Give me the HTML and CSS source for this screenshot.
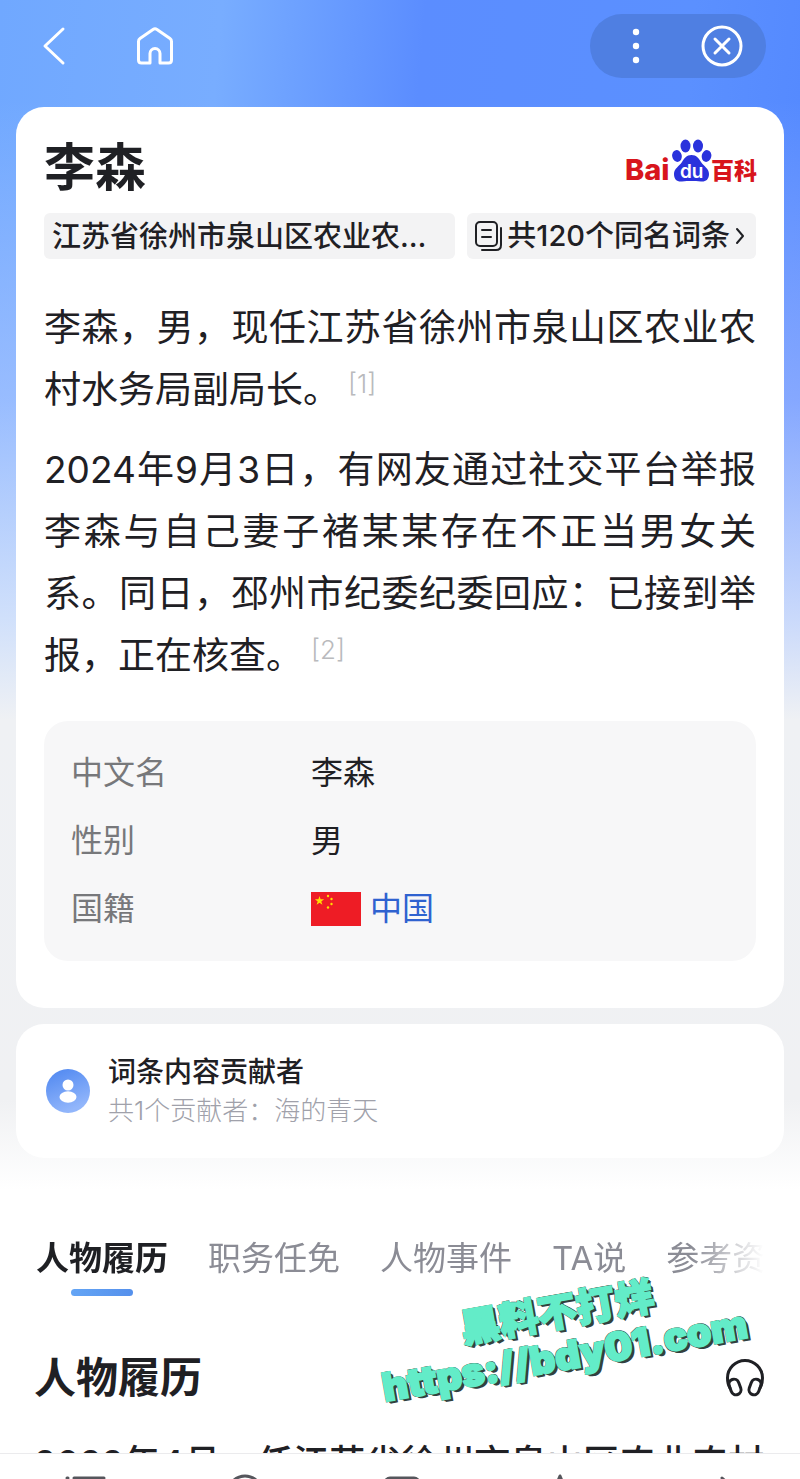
FILE: index.html
```html
<!DOCTYPE html>
<html lang="zh-CN">
<head>
    <meta charset="UTF-8">
    <meta name="viewport" content="width=device-width, initial-scale=1.0">
    <title>李森 - 百度百科</title>
    <link rel="stylesheet" href="styles.css">
</head>
<body>
    <div class="app">
        <div class="content">
            <header class="topbar">
                <button class="icon-btn" aria-label="返回">
                    <svg width="24" height="40" viewBox="0 0 24 40"><path d="M21 3 3 20l18 17"/></svg>
                </button>
                <button class="icon-btn home" aria-label="首页">
                    <svg width="40" height="40" viewBox="0 0 40 40"><path d="M3.500 15.500Q3.500 13.500 5 12.500L18 3.500q2-1.300 4 0l13 9q1.500 1 1.500 3V34q0 3-3 3H25v-9.500a5 5 0 0 0-10 0V37H6.500q-3 0-3-3Z"/></svg>
                </button>
                <div class="capsule">
                    <button class="icon-btn" aria-label="更多">
                        <svg class="dots" width="8" height="36" viewBox="0 0 8 36"><circle cx="4" cy="4" r="3.200"/><circle cx="4" cy="18" r="3.200"/><circle cx="4" cy="32" r="3.200"/></svg>
                    </button>
                    <button class="icon-btn" aria-label="关闭">
                        <svg width="44" height="44" viewBox="0 0 44 44"><circle cx="22" cy="22" r="19"/><path d="m15 15 14 14M29 15 15 29"/></svg>
                    </button>
                </div>
            </header>

            <section class="card summary">
                <div class="title-row">
                    <h1>李森</h1>
                    <svg class="logo" width="132" height="44" viewBox="0 0 132 44" role="img" aria-label="Baidu百科">
                        <text class="logo-red" x="1" y="41" font-size="29">Bai</text>
                        <g fill="#2a32dc">
                            <ellipse cx="53" cy="17" rx="4.800" ry="6" transform="rotate(-12 53 17)"/>
                            <ellipse cx="61.500" cy="7" rx="5" ry="6.400"/>
                            <ellipse cx="74" cy="7" rx="5" ry="6.400"/>
                            <ellipse cx="82.500" cy="17" rx="4.800" ry="6" transform="rotate(12 82.500 17)"/>
                            <path d="M67.500 16c5 0 7.500 3.500 9.500 7 2.500 4 8 6.500 8 12 0 5.500-3.500 8-8 7.500-4-.500-6-.500-9.500-.500s-6 0-9.500.500c-5 .500-8-2-8-7.500 0-5.500 5.500-8 8-12 2-3.500 4.500-7 9.500-7Z"/>
                        </g>
                        <text class="logo-du" x="56" y="39" font-size="19">du</text>
                        <text class="logo-cn" x="87" y="40" font-size="23">百科</text>
                    </svg>
                </div>

                <div class="chips">
                    <button class="chip desc">江苏省徐州市泉山区农业农村水务局副局长</button>
                    <button class="chip same">
                        <svg width="28" height="32" viewBox="0 0 28 32"><rect x="1" y="2" width="21" height="24" rx="4"/><path d="M7 10h9M7 17h9M26 8v17q0 5-5 5H7"/></svg>
                        <span>共120个同名词条</span>
                        <svg class="arrow" width="12" height="20" viewBox="0 0 12 20"><path d="m3 3 6 7-6 7"/></svg>
                    </button>
                </div>

                <div class="intro">
                    <p>李森，男，现任江苏省徐州市泉山区农业农村水务局副局长。<a class="ref" href="#ref1">[1]</a></p>
                    <p>2024年9月3日，有网友通过社交平台举报李森与自己妻子褚某某存在不正当男女关系。同日，邳州市纪委纪委回应：已接到举报，正在核查。<a class="ref" href="#ref2">[2]</a></p>
                </div>

                <dl class="info">
                    <dt>中文名</dt><dd>李森</dd>
                    <dt>性别</dt><dd>男</dd>
                    <dt>国籍</dt>
                    <dd>
                        <svg width="50" height="34" viewBox="0 0 50 34">
                            <rect width="50" height="34" fill="#ee1c25"/>
                            <g fill="#ffde00">
                                <path d="m8.500 4 1.100 3.300h3.500l-2.800 2.100 1.100 3.400-2.900-2.100-2.900 2.100 1.100-3.400-2.800-2.100h3.500Z"/>
                                <circle cx="17" cy="4" r="1.200"/><circle cx="20.500" cy="7" r="1.200"/><circle cx="20.500" cy="12" r="1.200"/><circle cx="17" cy="15.500" r="1.200"/>
                            </g>
                        </svg>
                        <a href="#china">中国</a>
                    </dd>
                </dl>
            </section>

            <section class="card contributor">
                <svg width="44" height="44" viewBox="0 0 44 44">
                    <defs>
                        <linearGradient id="avatar" x1="0" y1="0" x2="0.400" y2="1"><stop offset="0" stop-color="#4d86f0"/><stop offset="1" stop-color="#92b6fb"/></linearGradient>
                    </defs>
                    <circle cx="22" cy="22" r="22" fill="url(#avatar)"/>
                    <circle cx="22" cy="16" r="5.500" fill="#fff"/>
                    <ellipse cx="22" cy="28" rx="8.500" ry="5.800" fill="#fff"/>
                </svg>
                <div>
                    <h2>词条内容贡献者</h2>
                    <p>共1个贡献者：海的青天</p>
                </div>
            </section>

            <nav class="tabs">
                <a class="active" href="#resume">人物履历</a>
                <a href="#post">职务任免</a>
                <a href="#event">人物事件</a>
                <a href="#ta">TA说</a>
                <a href="#more">参考资料</a>
            </nav>

            <section class="resume" id="resume">
                <div class="resume-head">
                    <h2>人物履历</h2>
                    <button class="icon-btn" aria-label="听词条">
                        <svg class="headphones" width="38" height="38" viewBox="0 0 38 38"><path d="M4 29C1.500 25 1.500 20 1.500 19a17.500 17.500 0 0 1 35 0c0 1 0 6-2.500 10"/><rect x="4" y="20" width="10" height="16" rx="5" transform="rotate(-20 9 28)"/><rect x="24" y="20" width="10" height="16" rx="5" transform="rotate(20 29 28)"/></svg>
                    </button>
                </div>
                <p>2022年4月，任江苏省徐州市泉山区农业农村水务局副局长。</p>
            </section>
        </div>

        <footer class="bottombar">
            <svg width="44" height="40" viewBox="0 0 44 40"><path d="M10 2h30M3 2h1M10 18h30"/></svg>
            <svg width="44" height="40" viewBox="0 0 44 40"><circle cx="22" cy="17" r="17"/></svg>
            <svg width="44" height="40" viewBox="0 0 44 40"><rect x="4" y="2" width="34" height="32" rx="5"/></svg>
            <svg width="44" height="40" viewBox="0 0 44 40"><path d="m20 0 5 12 13 1-10 9 3 13-11-7-11 7 3-13-10-9 13-1Z"/></svg>
            <svg width="44" height="40" viewBox="0 0 44 40"><path d="m24 2 14 13-14 13"/></svg>
        </footer>

        <div class="watermark">
            <div>黑料不打烊</div>
            <div>https://bdy01.com</div>
        </div>
    </div>
</body>
</html>
```
FILE: styles.css
```css
* {
    box-sizing: border-box;
}
body {
    margin: 0;
    font-family: Inter, "Noto Sans CJK SC", sans-serif;
    color: #1f2024;
    background: #fff;
}
h1, h2, p, dl, dd {
    margin: 0;
}
a {
    color: inherit;
    text-decoration: none;
}
button {
    border: 0;
    padding: 0;
    background: none;
    font: inherit;
    color: inherit;
}
svg {
    display: block;
    flex: none;
    overflow: visible;
    fill: none;
    stroke-linecap: round;
    stroke-linejoin: round;
}
.app {
    position: relative;
    display: flex;
    flex-direction: column;
    height: 100vh;
    overflow: hidden;
}
.content {
    flex: 1;
    min-height: 0;
    overflow: hidden;
    background:
        linear-gradient(to bottom, rgba(225, 225, 255, 0) 100px, rgba(225, 225, 255, 0.35) 400px, rgba(232, 238, 250, 0.8) 620px, #eff1f4 720px, #f0f1f3 1100px, #fff 1190px),
        linear-gradient(95deg, #70a8ff 0%, #78adff 24%, #5b8dff 46%, #5b90ff 75%, #4f84ff 100%);
}

/* top bar */
.topbar {
    display: flex;
    align-items: center;
    height: 107px;
    padding: 0 34px 16px 42px;
}
.topbar svg {
    stroke: #fff;
    stroke-width: 3;
}
.home {
    margin-left: 69px;
}
.capsule {
    display: flex;
    align-items: center;
    justify-content: space-between;
    width: 176px;
    height: 64px;
    margin-left: auto;
    padding: 0 22px 0 42px;
    border-radius: 32px;
    background: #4f7fe2;
}
.topbar .dots {
    fill: #fff;
    stroke: none;
}

/* cards */
.card {
    margin: 0 16px 16px;
    padding: 28px;
    border-radius: 28px;
    background: #fff;
}
.summary {
    padding-bottom: 47px;
}
.title-row {
    display: flex;
    justify-content: space-between;
    height: 78px;
}
h1 {
    font-size: 51px;
    line-height: 66px;
    font-weight: 700;
}
.logo {
    margin-top: 4px;
}
.logo-red {
    fill: #d8151c;
    font-family: Inter, sans-serif;
    font-weight: 800;
}
.logo-du {
    fill: #fff;
    font-family: Inter, sans-serif;
    font-weight: 600;
}
.logo-cn {
    fill: #d8151c;
    font-family: "Noto Sans CJK SC", sans-serif;
    font-weight: 900;
}
.chips {
    display: flex;
    gap: 12px;
}
.chip {
    height: 46px;
    padding: 0 8px;
    border-radius: 6px;
    background: #f3f3f4;
    font-size: 29px;
    line-height: 48px;
    font-weight: 500;
    text-align: left;
}
.desc {
    flex: 1;
    min-width: 0;
    overflow: hidden;
    white-space: nowrap;
    text-overflow: ellipsis;
}
.same {
    display: flex;
    align-items: center;
    gap: 4px;
}
.same svg {
    stroke: #1f2024;
    stroke-width: 2;
}
.arrow {
    margin-right: 2px;
}
.intro {
    margin-top: 38px;
    font-size: 37px;
    line-height: 62px;
    text-align: justify;
}
.intro p {
    margin-bottom: 18px;
}
.ref {
    margin-left: 8px;
    font-size: 26px;
    line-height: 1;
    font-weight: 300;
    vertical-align: 10px;
    color: #b9babd;
}
.info {
    display: grid;
    grid-template-columns: 240px 1fr;
    margin-top: 34px;
    padding: 18px 27px;
    border-radius: 24px;
    background: #f7f7f8;
    font-size: 32px;
    line-height: 68px;
}
.info dt {
    color: #77787b;
}
.info dd {
    display: flex;
    align-items: center;
    gap: 9px;
}
.info a {
    color: #2f62d0;
}

.contributor {
    display: flex;
    align-items: center;
    gap: 18px;
    margin-bottom: 0;
    padding: 28px 30px;
}
.contributor h2 {
    font-size: 28px;
    line-height: 40px;
    font-weight: 500;
}
.contributor p {
    font-size: 26px;
    line-height: 38px;
    font-weight: 300;
    color: #a0a1aa;
}

/* tabs */
.tabs {
    display: flex;
    gap: 40px;
    margin: 76px 36px 0;
    overflow: hidden;
    font-size: 33px;
    line-height: 48px;
    white-space: nowrap;
    color: #8b8c95;
    -webkit-mask-image: linear-gradient(to right, #000 90%, transparent 100%);
    mask-image: linear-gradient(to right, #000 90%, transparent 100%);
}
.tabs .active {
    font-weight: 700;
    color: #1f2024;
}
.active::after {
    content: "";
    display: block;
    width: 62px;
    height: 7px;
    margin: 7px auto 0;
    border-radius: 4px;
    background: linear-gradient(to right, #64a5f5, #5590ec);
}

.resume {
    padding: 0 36px 0 34px;
}
.resume-head {
    display: flex;
    align-items: center;
    justify-content: space-between;
    margin-top: 50px;
}
.resume h2 {
    font-size: 42px;
    line-height: 64px;
    font-weight: 700;
}
.headphones {
    stroke: #1f2024;
    stroke-width: 3;
}
.resume p {
    margin-top: 22px;
    font-size: 36px;
    line-height: 62px;
    font-weight: 500;
    text-align: justify;
}

/* bottom bar */
.bottombar {
    display: flex;
    justify-content: space-between;
    flex: none;
    height: 26px;
    padding: 22px 58px 0 64px;
    overflow: hidden;
    border-top: 1px solid #ebebed;
    background: #fff;
}
.bottombar svg {
    stroke: #55565c;
    stroke-width: 3;
}

.watermark {
    position: absolute;
    left: 376px;
    top: 1290px;
    transform: rotate(-10deg);
    font-size: 39px;
    line-height: 44px;
    font-weight: 900;
    text-align: center;
    color: #63ecc8;
    -webkit-text-stroke: 2px #63ecc8;
    text-shadow: -1px -1px 0 #33403d, 1px -1px 0 #33403d, -1px 1px 0 #33403d, 2px 2px 0 #33403d, 3px 3px 0 #33403d;
}
```
